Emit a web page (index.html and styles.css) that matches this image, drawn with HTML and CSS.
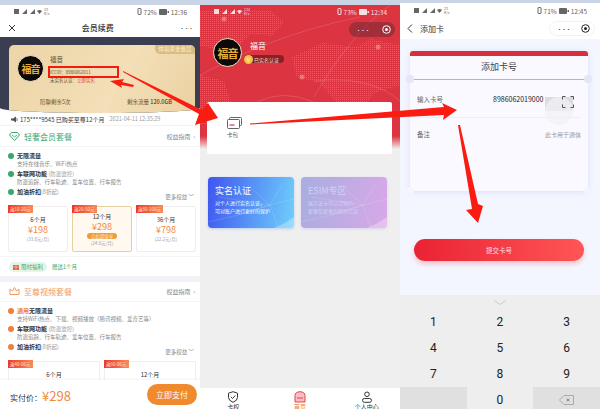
FILE: index.html
```html
<!DOCTYPE html>
<html lang="zh-CN">
<head>
    <meta charset="UTF-8">
    <meta name="viewport" content="width=device-width, initial-scale=1.0">
    <title>添加卡号</title>
    <link rel="stylesheet" href="styles.css">
</head>
<body>
<div class="page">

    <!-- left: membership renewal -->
    <section class="phone phone-member">
        <div class="strip"></div>
        <div class="status">
            <div class="status-left">
                <svg width="28" height="7" viewBox="0 0 28 7"><rect x="0" y="1" width="5" height="5" fill="currentColor"/><path d="M8 6l5-5v5zM16 6l5-5v5z" fill="currentColor"/><path d="M23 3q2.500-2 5 0l-2.500 3z" fill="currentColor"/></svg>
                <span class="speed">23<br>K/s</span>
            </div>
            <div class="status-right">
                <svg width="5" height="7" viewBox="0 0 5 7"><rect x="1" y="0.500" width="3" height="6" rx="0.500" fill="none" stroke="currentColor"/></svg>
                <span>72%</span>
                <svg width="10" height="6" viewBox="0 0 10 6"><rect width="8" height="6" rx="1" fill="currentColor"/><rect x="8.500" y="2" width="1.500" height="2" fill="currentColor"/></svg>
                <span>12:36</span>
            </div>
        </div>
        <div class="nav nav-center">
            <svg class="nav-close" width="8" height="8" viewBox="0 0 8 8"><path d="M1 1l6 6M7 1L1 7" stroke="#333" stroke-width="1"/></svg>
            <span class="nav-title">会员续费</span>
            <span class="nav-more">•••</span>
        </div>
        <div class="member-main">
            <div class="hero">
                <div class="gold-card">
                    <span class="gold-tag">体验黄金会员</span>
                    <div class="gold-top">
                        <div class="avatar avatar-sm">福音</div>
                        <div class="gold-info">
                            <div class="gold-name">福音</div>
                            <div class="gold-line">ICCID：8986062011</div>
                            <div class="gold-line">未实名认证：<em>立即实名</em></div>
                        </div>
                    </div>
                    <div class="gold-stats">
                        <span>陪聊剩余5次</span>
                        <span>剩余流量 <b>120.0GB</b></span>
                    </div>
                </div>
            </div>

            <div class="ticker">
                <svg width="7" height="7" viewBox="0 0 7 7"><path d="M0 2.500h2L5 .5v6L2 4.500H0z" fill="#555"/><path d="M6 2v3" stroke="#555" stroke-width=".8"/></svg>
                <span>175****9545 已购买至尊12个月</span>
                <span class="ticker-date">2021-04-11 12:35:29</span>
            </div>

            <div class="pack-head pack-green">
                <svg width="11" height="9" viewBox="0 0 11 9"><path d="M2.500.5h6l2 2.500-5 5.500L.5 3z" fill="none" stroke="#3aa76d" stroke-width="1"/><path d="M3 3l2.500 2L8 3" fill="none" stroke="#3aa76d" stroke-width=".8"/></svg>
                <span class="pack-name">轻奢会员套餐</span>
                <span class="pack-link">权益指南 &nbsp;›</span>
            </div>
            <ul class="feats feats-green">
                <li class="feat-title">无限流量</li>
                <li class="feat-sub">支持在线音乐、WiFi热点</li>
                <li class="feat-title">车联网功能 <i>(防盗监控)</i></li>
                <li class="feat-sub">防盗追踪、行车轨迹、爱车位置、行车报告</li>
                <li class="feat-title">加油折扣<i>(8折起)</i></li>
            </ul>
            <div class="more">更多权益 ﹀</div>
            <div class="plans">
                <div class="plan">
                    <span class="plan-tag">返10-20元</span>
                    <div class="plan-term">6个月</div>
                    <div class="plan-price">¥198</div>
                    <div class="plan-unit">(33.8元/月)</div>
                </div>
                <div class="plan plan-active">
                    <span class="plan-tag">返20-50元</span>
                    <div class="plan-term">12个月</div>
                    <div class="plan-price">¥298</div>
                    <div class="plan-pill">点此超值享</div>
                    <div class="plan-unit">(24.8元/月)</div>
                </div>
                <div class="plan">
                    <span class="plan-tag">返80-100元</span>
                    <div class="plan-term">36个月</div>
                    <div class="plan-price">¥798</div>
                    <div class="plan-unit">(22.2元/月)</div>
                </div>
            </div>
            <div class="bonus">
                <span class="bonus-pill">
                    <svg width="6" height="6" viewBox="0 0 6 6"><rect y="1" width="6" height="5" fill="#e8623a"/><path d="M3 1v5M0 3h6" stroke="#fbd9a8" stroke-width=".6"/></svg>
                    限时福利
                </span>
                <span class="bonus-text">赠送1个月</span>
            </div>
            <div class="band"></div>

            <div class="pack-head pack-orange">
                <svg width="11" height="9" viewBox="0 0 11 9"><path d="M1 2l2.500 2L5.500.5 7.500 4 10 2v5.500H1z" fill="none" stroke="#f19a5e" stroke-width="1"/></svg>
                <span class="pack-name">至尊视频套餐</span>
                <span class="pack-link">权益指南 &nbsp;›</span>
            </div>
            <ul class="feats feats-orange">
                <li class="feat-title"><u>通用</u>无限流量</li>
                <li class="feat-sub">支持WiFi热点、下载、视频播放（腾讯视频、爱奇艺等）</li>
                <li class="feat-title">车联网功能 <i>(防盗监控)</i></li>
                <li class="feat-sub">防盗追踪、行车轨迹、爱车位置、行车报告</li>
                <li class="feat-title">加油折扣<i>(8折起)</i></li>
            </ul>
            <div class="more">更多权益 ﹀</div>
            <div class="plans">
                <div class="plan plan-wide">
                    <span class="plan-tag">返40-60元</span>
                    <div class="plan-term">6个月</div>
                    <div class="plan-price">¥365</div>
                </div>
                <div class="plan plan-wide">
                    <span class="plan-tag">返60-80元</span>
                    <div class="plan-term">12个月</div>
                    <div class="plan-price">¥598</div>
                </div>
            </div>
        </div>
        <div class="pay-bar">
            <span class="pay-label">实付价：</span>
            <span class="pay-price">¥298</span>
            <span class="pay-btn">立即支付</span>
        </div>
    </section>

    <!-- middle: home -->
    <section class="phone phone-home">
        <div class="strip"></div>
        <div class="home-head">
            <svg class="home-map" width="200" height="136" viewBox="0 0 200 136">
                <defs>
                    <pattern id="dots" width="2" height="2" patternUnits="userSpaceOnUse"><rect width="1" height="1" fill="#fff" opacity=".2"/></pattern>
                </defs>
                <path d="M0 5h70l14 12-12 14-22-2-16 18-34-6z" fill="url(#dots)"/>
                <path d="M92 52l30-14 34 4 14-8 30 6v40l-26 8-14 20-22-8-18-22-24-6z" fill="url(#dots)"/>
                <path d="M0 70l24 6 8 24-14 20H0z" fill="url(#dots)"/>
                <g fill="none" stroke="#fff" stroke-opacity=".2" stroke-width=".7">
                    <path d="M-10 76Q70 30 160 12"/>
                    <path d="M36 112Q80 70 136 110"/>
                    <path d="M114 92Q150 30 190 0"/>
                    <path d="M114 76Q170 70 200 96"/>
                </g>
                <g fill="#fff" fill-opacity=".3">
                    <circle cx="24" cy="14" r="2.500"/>
                    <circle cx="102" cy="72" r="2.500"/>
                    <circle cx="178" cy="42" r="2.500"/>
                </g>
            </svg>
            <div class="status status-light">
                <div class="status-left">
                    <svg width="28" height="7" viewBox="0 0 28 7"><rect x="0" y="1" width="5" height="5" fill="currentColor"/><path d="M8 6l5-5v5zM16 6l5-5v5z" fill="currentColor"/><path d="M23 3q2.500-2 5 0l-2.500 3z" fill="currentColor"/></svg>
                    <span class="speed">134<br>K/s</span>
                </div>
                <div class="status-right">
                    <svg width="5" height="7" viewBox="0 0 5 7"><rect x="1" y="0.500" width="3" height="6" rx="0.500" fill="none" stroke="currentColor"/></svg>
                    <span>73%</span>
                    <svg width="10" height="6" viewBox="0 0 10 6"><rect width="8" height="6" rx="1" fill="currentColor"/><rect x="8.500" y="2" width="1.500" height="2" fill="currentColor"/></svg>
                    <span>12:34</span>
                </div>
            </div>
            <div class="capsule-row">
                <div class="capsule capsule-dark">
                    <span class="capsule-dots">•••</span>
                    <svg width="9" height="9" viewBox="0 0 9 9"><circle cx="4.500" cy="4.500" r="3.800" fill="none" stroke="currentColor"/><circle cx="4.500" cy="4.500" r="1.500" fill="currentColor"/></svg>
                </div>
            </div>
            <div class="profile">
                <div class="avatar avatar-md">福音</div>
                <div class="profile-info">
                    <div class="profile-name">福音</div>
                    <div class="profile-badge"><span class="badge-v">V</span>已实名认证</div>
                </div>
            </div>
            <div class="wallet">
                <svg width="15" height="12" viewBox="0 0 15 12"><rect x="2.500" y=".5" width="12" height="8" rx="1" fill="#fff" stroke="#555" stroke-width=".9"/><rect x=".5" y="2.500" width="12" height="9" rx="1" fill="#fff" stroke="#555" stroke-width=".9"/><rect x="2.500" y="7" width="5" height="2" fill="#e88a92"/></svg>
                <span>卡包</span>
            </div>
        </div>
        <div class="promo-row">
            <div class="promo promo-blue">
                <svg class="promo-net" width="86" height="51" viewBox="0 0 86 51"><path d="M0 45L30 38 62 28 86 22M10 20L62 28 74 8M30 38L62 28 70 50M40 8L62 28" fill="none" stroke="#fff" stroke-opacity=".28" stroke-width=".5"/><path d="M66 51Q78 46 86 40V51z" fill="#fff" fill-opacity=".3"/></svg>
                <div class="promo-title">实名认证</div>
                <div class="promo-text">对个人进行实名认证，</div>
                <div class="promo-text">可对账户进行更好的保护</div>
            </div>
            <div class="promo promo-purple">
                <svg class="promo-net" width="86" height="51" viewBox="0 0 86 51"><path d="M0 45L30 38 62 28 86 22M10 20L62 28 74 8M30 38L62 28 70 50M40 8L62 28" fill="none" stroke="#fff" stroke-opacity=".28" stroke-width=".5"/><path d="M66 51Q78 46 86 40V51z" fill="#fff" fill-opacity=".3"/></svg>
                <div class="promo-title">ESIM专区</div>
                <div class="promo-text">展示该卡可以订购的</div>
                <div class="promo-text">套餐及套餐的相关信息</div>
            </div>
        </div>
        <div class="tabbar">
            <div class="tab">
                <svg width="12" height="12" viewBox="0 0 12 12"><path d="M6 .7l4.500 1.500v4.300Q10.500 9.500 6 11.300 1.500 9.500 1.500 6.500V2.200z" fill="none" stroke="#333"/><path d="M3.800 5.800L5.500 7.500 8.300 4.500" fill="none" stroke="#333"/></svg>
                <span>卡权</span>
            </div>
            <div class="tab tab-active">
                <svg width="12" height="12" viewBox="0 0 12 12"><path d="M1 11V4.500Q1 1 6 .7 11 1 11 4.500V11z" fill="#f9bfc4" stroke="#e8414f"/><rect x="3" y="6.500" width="6" height="1" fill="#e8414f"/></svg>
                <span>首页</span>
            </div>
            <div class="tab">
                <svg width="12" height="12" viewBox="0 0 12 12"><circle cx="6" cy="3.300" r="2.300" fill="none" stroke="#333"/><rect x="1.500" y="7.500" width="9" height="3.800" rx="1.900" fill="none" stroke="#333"/></svg>
                <span>个人中心</span>
            </div>
        </div>
    </section>

    <!-- right: add card -->
    <section class="phone phone-add">
        <div class="strip strip-thin"></div>
        <div class="status status-add">
            <div class="status-left">
                <svg width="28" height="7" viewBox="0 0 28 7"><rect x="0" y="1" width="5" height="5" fill="currentColor"/><path d="M8 6l5-5v5zM16 6l5-5v5z" fill="currentColor"/><path d="M23 3q2.500-2 5 0l-2.500 3z" fill="currentColor"/></svg>
                <span class="speed">23<br>K/s</span>
            </div>
            <div class="status-right">
                <svg width="5" height="7" viewBox="0 0 5 7"><rect x="1" y="0.500" width="3" height="6" rx="0.500" fill="none" stroke="currentColor"/></svg>
                <span>71%</span>
                <svg width="10" height="6" viewBox="0 0 10 6"><rect width="8" height="6" rx="1" fill="currentColor"/><rect x="8.500" y="2" width="1.500" height="2" fill="currentColor"/></svg>
                <span>12:45</span>
            </div>
        </div>
        <div class="nav nav-add">
            <svg width="6" height="9" viewBox="0 0 6 9"><path d="M5 .5L1 4.500l4 4" fill="none" stroke="#333"/></svg>
            <span class="nav-add-title">添加卡</span>
            <div class="capsule capsule-light">
                <span class="capsule-dots">•••</span>
                <svg width="9" height="9" viewBox="0 0 9 9"><circle cx="4.500" cy="4.500" r="3.800" fill="none" stroke="currentColor"/><circle cx="4.500" cy="4.500" r="1.500" fill="currentColor"/></svg>
            </div>
        </div>
        <div class="add-body">
            <div class="ticket">
                <div class="ticket-title">添加卡号</div>
                <div class="ticket-row ticket-row-line">
                    <span class="ticket-label">输入卡号</span>
                    <span class="ticket-value">8986062019000</span>
                    <span class="ticket-blur"></span>
                    <svg class="ticket-scan" width="12" height="12" viewBox="0 0 12 12"><path d="M.5 3.500v-3h3M8.500.5h3v3M11.500 8.500v3h-3M3.500 11.500h-3v-3" fill="none" stroke="#555"/></svg>
                </div>
                <div class="ticket-row">
                    <span class="ticket-label">备注</span>
                    <span class="ticket-note">此卡用于通信</span>
                </div>
            </div>
            <div class="submit">提交卡号</div>
        </div>
        <div class="keyboard">
            <svg class="keyboard-hide" width="14" height="5" viewBox="0 0 14 5"><path d="M1 .5l6 4 6-4" fill="none" stroke="#ccc"/></svg>
            <div class="keys">
                <div class="key">1</div><div class="key">2</div><div class="key">3</div>
                <div class="key">4</div><div class="key">5</div><div class="key">6</div>
                <div class="key">7</div><div class="key">8</div><div class="key">9</div>
                <div class="key key-dark"></div><div class="key">0</div>
                <div class="key key-dark">
                    <svg width="15" height="10" viewBox="0 0 15 10"><path d="M5 .5h9.500v9H5L.5 5z" fill="none" stroke="#aaa"/><path d="M7.500 3.500l3 3M10.500 3.500l-3 3" stroke="#888"/></svg>
                </div>
            </div>
        </div>
    </section>

    <!-- annotations drawn on top of the screenshots -->
    <svg class="marks" width="600" height="409" viewBox="0 0 600 409">
        <g fill="#fa1c10">
            <path d="M133 87L121 85 122 88 110 81 124 79 122 82 134 85z"/>
            <path d="M123 71L202 110 208 103 218 118 195 125 199 114 123 72z"/>
            <path d="M250 123.500L444 107 442 103 457 110 443 120 444 115 250 124.500z"/>
            <path d="M458 125L460 125 478 204 483 206 478 223 466 210 472 209z"/>
        </g>
        <rect x="49" y="67" width="69" height="10" fill="none" stroke="#f01c10" stroke-width="2"/>
    </svg>
</div>
</body>
</html>
```
FILE: styles.css
```css
* {
    box-sizing: border-box;
}
body {
    margin: 0;
    background-color: #fff;
    font-family: "Noto Sans CJK SC", "Liberation Sans", sans-serif;
    color: #333;
}
.page {
    position: relative;
    display: flex;
    width: 600px;
    height: 409px;
    overflow: hidden;
}
.marks {
    position: absolute;
    top: 0;
    left: 0;
    pointer-events: none;
}
.phone {
    display: flex;
    flex-direction: column;
    width: 200px;
    height: 409px;
    overflow: hidden;
}
.strip {
    flex: none;
    height: 5px;
    background-color: #c9d4e6;
}
.strip-thin {
    height: 3px;
}

/* status bar */
.status {
    flex: none;
    display: flex;
    justify-content: space-between;
    align-items: center;
    height: 13px;
    padding: 0 13px 0 14px;
    background-color: #fff;
    color: #666;
    font-size: 6.5px;
}
.status-light {
    position: relative;
    background: none;
    color: #f6dfe1;
}
.status-add {
    height: 15px;
}
.status-left, .status-right {
    display: flex;
    align-items: center;
    gap: 2px;
}
.speed {
    font-size: 3.5px;
    line-height: 4px;
}

/* nav bars */
.nav {
    flex: none;
    display: flex;
    align-items: center;
    background-color: #fff;
}
.nav-center {
    justify-content: space-between;
    height: 19px;
    padding: 0 7px 0 8px;
}
.nav-title {
    font-size: 8px;
    font-weight: 500;
}
.nav-more {
    font-size: 5px;
    letter-spacing: -.5px;
}
.nav-add {
    height: 21px;
    padding: 0 5px 0 7px;
}
.nav-add-title {
    margin-left: 7px;
    font-size: 8px;
}
.capsule {
    display: flex;
    justify-content: space-between;
    align-items: center;
    width: 46px;
    height: 15px;
    padding: 0 4px 0 7px;
    border-radius: 8px;
}
.capsule-dots {
    font-size: 5px;
    letter-spacing: -.5px;
}
.capsule-dark {
    background-color: rgba(90, 40, 50, .45);
    color: #fff;
}
.capsule-light {
    margin-left: auto;
    border: 1px solid #f2f2f2;
    color: #222;
}

/* avatars */
.avatar {
    flex: none;
    display: flex;
    justify-content: center;
    align-items: center;
    border: 1px solid #f4e6c8;
    border-radius: 50%;
    background-color: #0c0a08;
    color: #e5b13c;
    font-weight: 700;
    letter-spacing: -1px;
}
.avatar-sm {
    width: 27px;
    height: 27px;
    font-size: 10px;
}
.avatar-md {
    width: 29px;
    height: 29px;
    font-size: 11px;
}

/* left phone */
.member-main {
    flex: 1;
    min-height: 0;
    overflow: hidden;
    background-color: #fff;
}
.hero {
    height: 76px;
    padding: 8px 5px 0 9px;
    overflow: hidden;
    border-radius: 0 0 50% 50% / 0 0 5px 5px;
    background-color: #3b3e50;
}
.gold-card {
    position: relative;
    height: 90px;
    padding: 10px 8px 0;
    border-radius: 5px;
    background: linear-gradient(120deg, #ecd5a6, #f3dfb8 55%, #e9cf9e);
}
.gold-tag {
    position: absolute;
    top: 0;
    right: 0;
    width: 40px;
    height: 9px;
    border-radius: 0 5px 0 5px;
    background-color: #dcbb80;
    color: #fff3da;
    font-size: 5.5px;
    line-height: 9px;
    text-align: center;
}
.gold-top {
    display: flex;
    gap: 6px;
    height: 40px;
}
.gold-name {
    margin-bottom: 4px;
    font-size: 6.5px;
    line-height: 9px;
    color: #6a5230;
}
.gold-line {
    font-size: 4.5px;
    line-height: 8px;
    color: #6a5230;
}
.gold-line em {
    font-style: normal;
    color: #e4472e;
}
.gold-stats {
    display: flex;
    justify-content: space-between;
    padding: 3px 15px 0 23px;
    font-size: 5.5px;
    color: #6a5230;
}
.gold-stats b {
    font-weight: 500;
    color: #4c3a20;
}
.ticker {
    display: flex;
    align-items: center;
    gap: 2px;
    height: 13px;
    padding-left: 11px;
    border-bottom: 1px solid #f2f2f2;
    font-size: 6px;
    color: #333;
}
.ticker-date {
    margin-left: 3px;
    font-size: 5.5px;
    color: #999;
}
.pack-head {
    display: flex;
    align-items: center;
    gap: 4px;
    height: 21px;
    padding: 0 5px 0 9px;
    border-bottom: 1px solid #f5f5f5;
}
.pack-name {
    font-size: 8px;
}
.pack-green {
    color: #3aa76d;
}
.pack-orange {
    height: 20px;
    color: #f19a5e;
}
.pack-link {
    margin-left: auto;
    font-size: 6px;
    color: #888;
}
.feats {
    margin: 0;
    padding: 4px 0 0 8px;
    list-style: none;
}
.feats li {
    position: relative;
    height: 9px;
    padding-left: 9px;
    line-height: 9px;
}
.feat-title {
    font-size: 6px;
    font-weight: 700;
}
.feat-title i {
    font-style: normal;
    font-weight: 400;
    font-size: 5.5px;
    color: #999;
}
.feat-title u {
    text-decoration: none;
    color: #f0813a;
}
.feat-title::before {
    content: "";
    position: absolute;
    top: 1.5px;
    left: 0;
    width: 6px;
    height: 6px;
    border-radius: 50%;
}
.feats-green .feat-title::before {
    background-color: #3aa76d;
}
.feats-orange .feat-title::before {
    background-color: #f0813a;
}
.feat-sub {
    font-size: 5.5px;
    color: #888;
}
.more {
    height: 8px;
    margin-top: -3px;
    padding-right: 6px;
    font-size: 5.5px;
    line-height: 8px;
    text-align: right;
    color: #888;
}
.plans {
    display: flex;
    gap: 4px;
    height: 46px;
    margin-top: 5px;
    padding: 0 4px 0 8px;
}
.plan {
    position: relative;
    flex: 1;
    padding-top: 8px;
    border: 1px solid #eee;
    border-radius: 2px;
    text-align: center;
}
.plan-active {
    padding-top: 5px;
    border-color: #e8cf9e;
    background-color: #fff9ef;
}
.plan-tag {
    position: absolute;
    top: -2px;
    left: -1px;
    padding: 0 2px;
    background: linear-gradient(90deg, #ec3a2c, #f98a55);
    color: #ffe9d8;
    font-size: 4.5px;
    line-height: 8px;
    white-space: nowrap;
}
.plan-term {
    font-size: 6px;
    line-height: 9px;
}
.plan-price {
    font-size: 9px;
    line-height: 11px;
    color: #f08a3c;
}
.plan-unit {
    margin-top: 1px;
    font-size: 4.5px;
    line-height: 7px;
    color: #999;
}
.plan-pill {
    width: 30px;
    margin: 1px auto 0;
    border-radius: 3px;
    background-color: #f09a3e;
    color: #fde8c8;
    font-size: 4.5px;
    line-height: 6px;
}
.bonus {
    display: flex;
    align-items: center;
    gap: 5px;
    height: 17px;
    margin-top: 4px;
    padding: 3px 0 0 9px;
    border-top: 1px solid #f5f5f5;
}
.bonus-pill {
    display: flex;
    align-items: center;
    gap: 2px;
    height: 10px;
    padding: 0 4px;
    border-radius: 5px;
    background-color: #e3f5ea;
    color: #3aa76d;
    font-size: 5.5px;
}
.bonus-text {
    font-size: 5.5px;
    color: #3aa76d;
}
.band {
    height: 6px;
    margin-top: 3px;
    background-color: #f2f2f6;
}
.pay-bar {
    flex: none;
    display: flex;
    align-items: center;
    height: 29px;
    padding: 0 3px 0 10px;
    background-color: #fff;
    box-shadow: 0 -1px 2px rgba(0, 0, 0, .05);
}
.pay-label {
    margin-top: 5px;
    font-size: 8px;
}
.pay-price {
    margin-top: 2px;
    font-size: 13px;
    color: #f08a3c;
}
.pay-btn {
    margin-left: auto;
    width: 50px;
    height: 21px;
    border-radius: 11px;
    background-color: #f08a2c;
    color: #fff;
    font-size: 8px;
    line-height: 21px;
    text-align: center;
}

/* middle phone */
.phone-home {
    background-color: #efefef;
}
.home-head {
    position: relative;
    flex: none;
    display: flex;
    flex-direction: column;
    height: 144px;
    background: linear-gradient(#dc3440, #dc3440 91%, #efefef);
}
.home-map {
    position: absolute;
    top: 0;
    left: 0;
}
.capsule-row {
    position: relative;
    display: flex;
    justify-content: flex-end;
    padding: 4px 5px 0 0;
}
.profile {
    position: relative;
    display: flex;
    gap: 6px;
    padding: 1px 0 0 13px;
}
.profile-info {
    padding-top: 2px;
    color: #fff;
}
.profile-name {
    margin-bottom: 4px;
    padding-left: 2px;
    font-size: 8px;
    line-height: 11px;
}
.profile-badge {
    display: flex;
    align-items: center;
    gap: 1px;
    width: 40px;
    height: 8px;
    margin-left: -4px;
    border-radius: 4px;
    background-color: rgba(80, 20, 30, .6);
    color: #f7dfd0;
    font-size: 5px;
}
.badge-v {
    width: 9px;
    height: 9px;
    border-radius: 50%;
    background-color: #f3c63f;
    color: #fff;
    font-size: 5px;
    line-height: 9px;
    text-align: center;
}
.wallet {
    position: relative;
    display: flex;
    flex-direction: column;
    align-items: flex-start;
    gap: 2px;
    flex: none;
    height: 52px;
    margin: 35px 8px 0 7px;
    padding: 15px 0 0 20px;
    border-radius: 2px;
    background-color: #fff;
    font-size: 5.5px;
    color: #555;
}
.promo-row {
    flex: none;
    display: flex;
    gap: 7px;
    margin-top: 28px;
    padding-left: 8px;
}
.promo {
    position: relative;
    width: 86px;
    height: 51px;
    padding: 8px 7px 0;
    overflow: hidden;
    border-radius: 4px;
    color: #fff;
}
.promo-blue {
    background: linear-gradient(100deg, #3f55f0, #6fd0fb);
    box-shadow: 0 1px 3px rgba(90, 150, 240, .35);
}
.promo-purple {
    background: linear-gradient(100deg, #a8aee0, #d8a8e8);
    box-shadow: 0 1px 3px rgba(180, 160, 230, .35);
    color: #cfd2f2;
}
.promo-net {
    position: absolute;
    top: 0;
    left: 0;
}
.promo-title {
    position: relative;
    margin-bottom: 2px;
    font-size: 9px;
    line-height: 12px;
}
.promo-text {
    position: relative;
    font-size: 5px;
    line-height: 8px;
    white-space: nowrap;
}
.tabbar {
    flex: none;
    display: flex;
    height: 21px;
    margin-top: auto;
    padding-top: 3px;
    background-color: #fff;
}
.tab {
    flex: 1;
    display: flex;
    flex-direction: column;
    align-items: center;
    font-size: 6px;
    line-height: 8px;
}
.tab svg {
    flex: none;
}
.tab-active {
    color: #e8763a;
}

/* right phone */
.phone-add {
    background-color: #f4f6ff;
}
.add-body {
    flex: 1;
    min-height: 0;
    padding: 12px 0 0 10px;
}
.ticket {
    position: relative;
    width: 178px;
    height: 140px;
    border-top: 5px solid #d7303c;
    border-radius: 3px 3px 0 0;
    background-color: #f9f9ff;
    box-shadow: 0 1px 6px rgba(120, 130, 200, .2);
}
.ticket::before, .ticket::after {
    content: "";
    position: absolute;
    bottom: -3px;
    width: 7px;
    height: 7px;
    border-radius: 50%;
    background-color: #f4f6ff;
}
.ticket::before {
    left: -3px;
}
.ticket::after {
    right: -3px;
}
.ticket-title {
    position: relative;
    height: 24px;
    border-bottom: 1px solid #b5b5bd;
    font-size: 9px;
    line-height: 22px;
    text-align: center;
    color: #444;
}
.ticket-title::before, .ticket-title::after {
    content: "";
    position: absolute;
    bottom: -4px;
    width: 8px;
    height: 8px;
    border-radius: 50%;
    background-color: #e4e6f8;
}
.ticket-title::before {
    left: -4px;
}
.ticket-title::after {
    right: -4px;
}
.ticket-row {
    position: relative;
    display: flex;
    align-items: center;
    height: 32px;
    margin: 0 7px;
    font-size: 6.5px;
    color: #666;
}
.ticket-row-line {
    height: 38px;
    border-bottom: 1px solid #eee;
}
.ticket-value {
    margin-left: 50px;
    font-size: 7px;
    color: #222;
}
.ticket-blur {
    position: absolute;
    top: 17px;
    left: 128px;
    width: 28px;
    height: 14px;
    background-color: #dcdce0;
}
.ticket-blur::after {
    content: "";
    position: absolute;
    top: 0;
    left: 0;
    width: 28px;
    height: 28px;
    border-radius: 50%;
    background-color: rgba(240, 240, 246, .75);
}
.ticket-scan {
    position: absolute;
    top: 16px;
    right: 7px;
}
.ticket-note {
    margin-left: auto;
    font-size: 6px;
    color: #999;
}
.submit {
    width: 170px;
    height: 22px;
    margin: 48px 0 0 4px;
    border-radius: 11px;
    background: linear-gradient(90deg, #ea2233, #fe5656);
    box-shadow: 0 3px 5px rgba(234, 34, 51, .25);
    color: #fde;
    font-size: 6.5px;
    line-height: 22px;
    text-align: center;
}
.keyboard {
    flex: none;
    display: flex;
    flex-direction: column;
    height: 114px;
    padding-top: 5px;
    background-color: #eee;
}
.keyboard-hide {
    flex: none;
    align-self: center;
    height: 5px;
}
.keys {
    flex: none;
    display: grid;
    grid-template-columns: repeat(3, 1fr);
    grid-auto-rows: 26px;
    margin-top: 4px;
}
.key {
    display: flex;
    justify-content: center;
    align-items: center;
    font-family: "Roboto", sans-serif;
    font-size: 12px;
    color: #222;
}
.key-dark {
    background-color: #e0e0e0;
}
```
